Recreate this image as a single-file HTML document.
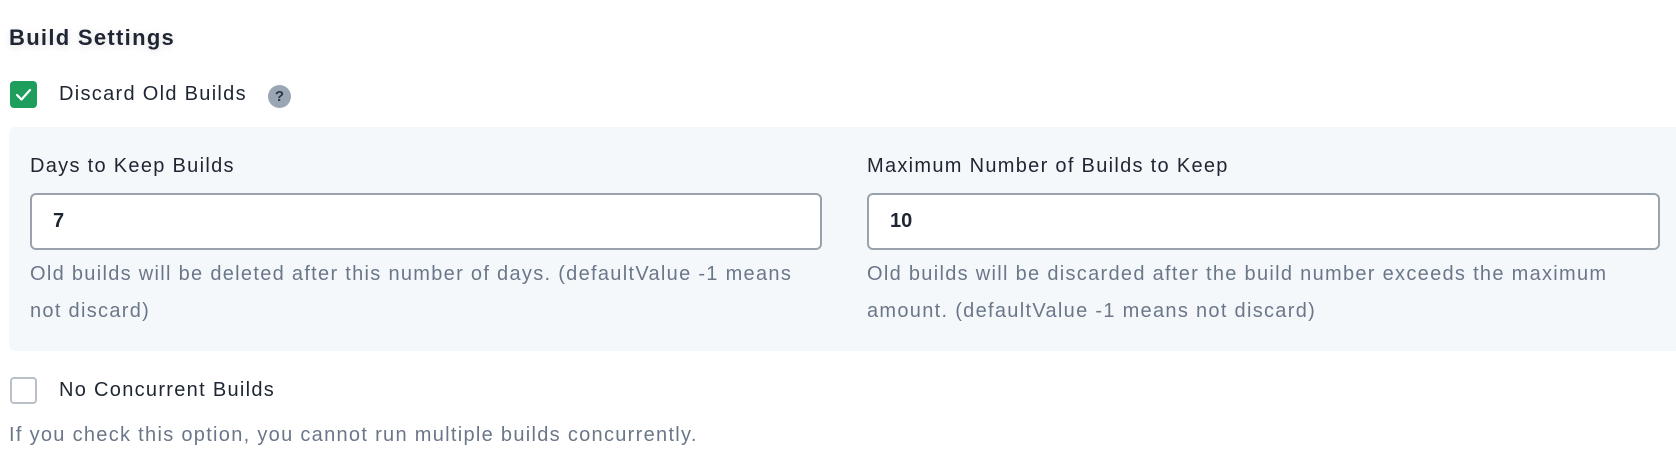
<!DOCTYPE html>
<html><head><style>
body{margin:0;width:1676px;height:472px;background:#fff;font-family:"Liberation Sans",sans-serif;position:relative;overflow:hidden;color:#1f2633}
.a{position:absolute;white-space:nowrap}
.title{left:9px;top:25px;font-size:22px;font-weight:bold;letter-spacing:1.3px;text-shadow:0 2px 8px rgba(0,0,0,.12)}
.cb{position:absolute;width:27px;height:27px;border-radius:4px;box-sizing:border-box}
.lbl{font-size:20px;letter-spacing:1.3px}
.panel{position:absolute;left:9px;top:127px;width:1680px;height:224px;background:#f5f8fb;border-radius:6px}
.inp{position:absolute;height:57px;box-sizing:border-box;border:2px solid #9aa3ad;border-radius:6px;background:#fff;font-size:20px;font-weight:bold;line-height:53px;padding-left:21px}
.help{font-size:20px;color:#6b7789;line-height:37px;letter-spacing:1.3px}
</style></head><body>
<div class="a title">Build Settings</div>
<div class="cb" style="left:10px;top:81px;background:#1e9e5c">
<svg width="27" height="27" viewBox="0 0 27 27"><path d="M7 14 L11.5 18.5 L20 9" stroke="#fff" stroke-width="2.2" fill="none" stroke-linecap="round" stroke-linejoin="round"/></svg></div>
<div class="a lbl" style="left:59px;top:83px">Discard Old Builds</div>
<div class="a" style="left:268px;top:85px;width:23px;height:23px;border-radius:50%;background:#9aa6b3;color:#2c3440;font-size:15px;font-weight:bold;text-align:center;line-height:23px">?</div>
<div class="panel"></div>
<div class="a lbl" style="left:30px;top:155px">Days to Keep Builds</div>
<div class="inp" style="left:30px;top:193px;width:792px">7</div>
<div class="a help" style="left:30px;top:256px">Old builds will be deleted after this number of days. (defaultValue -1 means<br>not discard)</div>
<div class="a lbl" style="left:867px;top:155px">Maximum Number of Builds to Keep</div>
<div class="inp" style="left:867px;top:193px;width:793px">10</div>
<div class="a help" style="left:867px;top:256px">Old builds will be discarded after the build number exceeds the maximum<br>amount. (defaultValue -1 means not discard)</div>
<div class="cb" style="left:10px;top:377px;border:2px solid #b9c0c8;background:#fff"></div>
<div class="a lbl" style="left:59px;top:379px">No Concurrent Builds</div>
<div class="a help" style="left:9px;top:417px">If you check this option, you cannot run multiple builds concurrently.</div>
</body></html>
